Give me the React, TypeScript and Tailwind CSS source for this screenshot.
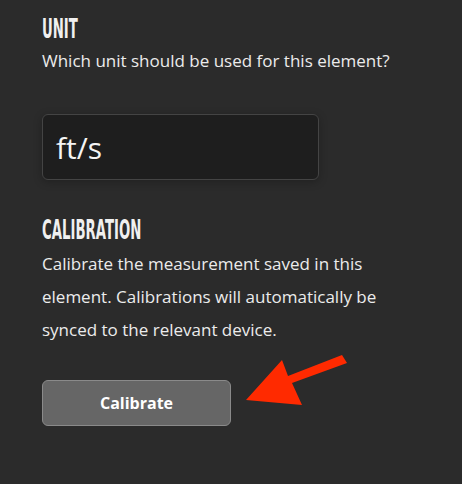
import React from 'react'

function Heading({ children }: { children: React.ReactNode }) {
    return (
        <h2 className="h-[25px] text-[26px] leading-[25px] font-bold uppercase text-[#f0f0f0] [font-family:'DejaVu_Sans',sans-serif]">
            <span className="inline-block origin-left scale-x-[0.51] whitespace-nowrap">{children}</span>
        </h2>
    )
}

function Arrow() {
    return (
        <svg className="absolute left-0 top-0 pointer-events-none" width="462" height="484" viewBox="0 0 462 484">
            <polygon points="342,355 347,363 292,383 302,405 246,400 282,360 288,376" fill="#ff2a00" />
        </svg>
    )
}

export default function App() {
    return (
        <div className="relative w-[462px] h-[484px] bg-[#2b2b2b] overflow-hidden [font-family:'Open_Sans',sans-serif]">
            <div className="flex flex-col pl-[42px] pt-[17px]">
                <Heading>Unit</Heading>
                <p className="mt-[9px] text-[17px] leading-[20px] text-[#ececec] whitespace-nowrap">Which unit should be used for this element?</p>
                <div className="mt-[43px] w-[277px] h-[66px] flex items-center px-[13px] bg-[#1e1e1e] border border-[#444] rounded-[6px] shadow-[0_2px_8px_rgba(0,0,0,0.25)]">
                    <span className="text-[30px] text-[#f5f5f5]">ft/s</span>
                </div>
                <div className="mt-[38px]">
                    <Heading>Calibration</Heading>
                </div>
                <p className="mt-[4px] w-[345px] text-[17px] leading-[33px] text-[#ececec]">
                    Calibrate the measurement saved in this element. Calibrations will automatically be synced to the relevant device.
                </p>
                <button className="mt-[34px] w-[189px] h-[46px] bg-[#666666] border border-[#8a8a8a] rounded-[6px] text-white font-bold text-[16px] [font-family:'Open_Sans',sans-serif]">
                    Calibrate
                </button>
            </div>
            <Arrow />
        </div>
    )
}
